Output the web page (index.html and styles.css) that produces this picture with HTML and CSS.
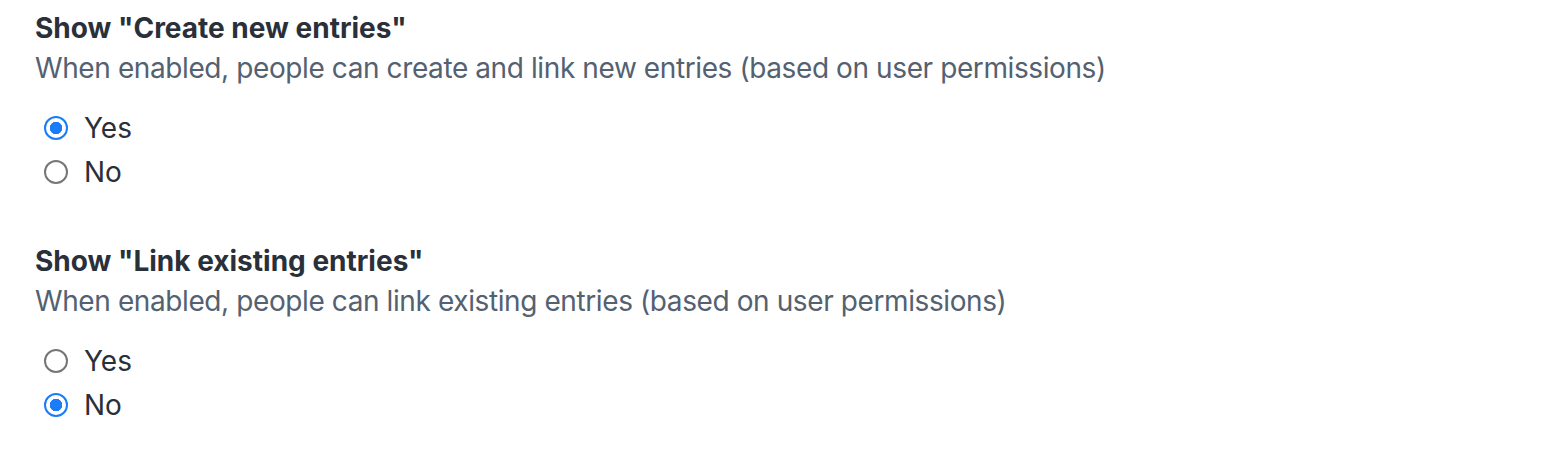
FILE: index.html
```html
<!DOCTYPE html>
<html lang="en">
<head>
    <meta charset="UTF-8">
    <meta name="viewport" content="width=device-width, initial-scale=1.0">
    <title>Reference field settings</title>
    <link rel="stylesheet" href="styles.css">
</head>
<body>

    <div class="settings">
        <div class="field">
            <h2 class="field-title">Show "Create new entries"</h2>
            <p class="field-hint">When enabled, people can create and link new entries (based on user permissions)</p>
            <div class="options">
                <label class="option">
                    <input type="radio" name="create" value="yes" checked>
                    <span>Yes</span>
                </label>
                <label class="option">
                    <input type="radio" name="create" value="no">
                    <span>No</span>
                </label>
            </div>
        </div>

        <div class="field">
            <h2 class="field-title">Show "Link existing entries"</h2>
            <p class="field-hint">When enabled, people can link existing entries (based on user permissions)</p>
            <div class="options">
                <label class="option">
                    <input type="radio" name="link" value="yes">
                    <span>Yes</span>
                </label>
                <label class="option">
                    <input type="radio" name="link" value="no" checked>
                    <span>No</span>
                </label>
            </div>
        </div>
    </div>

</body>
</html>
```

FILE: styles.css
```css
body{
    margin:0;
    padding:0;
    background-color: #ffffff;
    font-family: Inter, "Liberation Sans", sans-serif;
}

.settings{
    padding:8px 35px;
}
.field{
    margin-bottom:47px;
}
.field-title{
    margin:0;
    font-size: 28px;
    line-height: 40px;
    font-weight: 700;
    color: #2a3039;
}
.field-hint{
    margin:0;
    font-size: 28px;
    line-height: 40px;
    letter-spacing: -0.4px;
    color: #536171;
}
.options{
    margin-top:18px;
    display: flex;
    flex-direction: column;
}
.option{
    display: flex;
    align-items: center;
    height:44px;
    font-size: 28px;
    color: #2a3039;
    cursor: pointer;
}
.option input{
    appearance: none;
    -webkit-appearance: none;
    width:24px;
    height:24px;
    margin:0 16px 0 9px;
    border:2px solid #767676;
    border-radius: 50%;
    background-color: white;
    flex-shrink: 0;
}
.option input:checked{
    border-color: #1a7cf8;
    background: radial-gradient(circle, #1a7cf8 0 6px, white 6.5px);
}
```
